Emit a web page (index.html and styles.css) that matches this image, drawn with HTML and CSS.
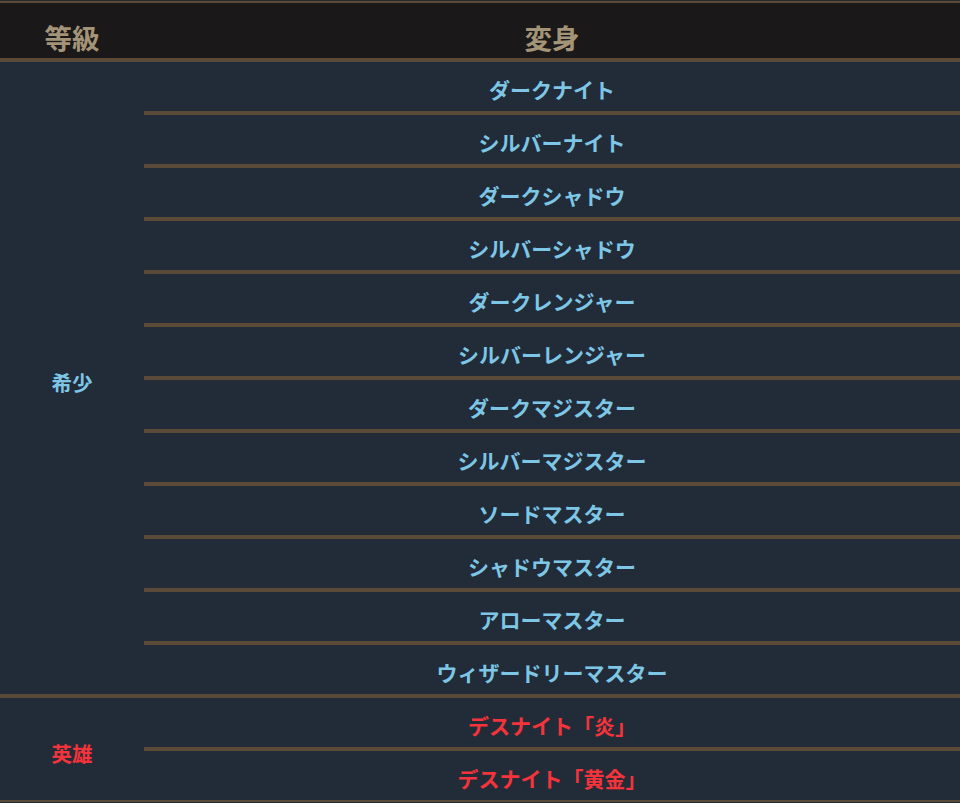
FILE: index.html
```html
<!DOCTYPE html>
<html lang="ja">
<head>
<meta charset="utf-8">
<title>変身</title>
<link rel="stylesheet" href="styles.css">
</head>
<body>
<div class="table">
  <div class="head">
    <div class="h-rank">等級</div>
    <div class="h-name">変身</div>
  </div>
  <div class="group rare">
    <div class="rank">希少</div>
    <div class="list">
      <div class="item">ダークナイト</div>
      <div class="item">シルバーナイト</div>
      <div class="item">ダークシャドウ</div>
      <div class="item">シルバーシャドウ</div>
      <div class="item">ダークレンジャー</div>
      <div class="item">シルバーレンジャー</div>
      <div class="item">ダークマジスター</div>
      <div class="item">シルバーマジスター</div>
      <div class="item">ソードマスター</div>
      <div class="item">シャドウマスター</div>
      <div class="item">アローマスター</div>
      <div class="item">ウィザードリーマスター</div>
    </div>
  </div>
  <div class="group hero">
    <div class="rank">英雄</div>
    <div class="list">
      <div class="item">デスナイト「炎」</div>
      <div class="item">デスナイト「黄金」</div>
    </div>
  </div>
</div>
</body>
</html>
```

FILE: styles.css
```css
html, body {
  margin: 0;
  padding: 0;
  background: #212c38;
}
body {
  font-family: "Noto Sans CJK JP", "Noto Sans", sans-serif;
  font-weight: 700;
}
.table {
  border-top: 1px solid #2a2a2a;
}
.head {
  display: flex;
  background: #1a1818;
  border-top: 2px solid #5c4a38;
  border-bottom: 4px solid #5c4a38;
  color: #a39377;
  font-size: 27.5px;
  line-height: 42px;
  padding-top: 13px;
}
.h-rank {
  width: 144px;
  text-align: center;
}
.h-name {
  flex: 1;
  text-align: center;
}
.group {
  display: flex;
  border-bottom: 4px solid #5c4a38;
}
.group.hero {
  border-bottom-width: 2px;
}
.rank {
  width: 144px;
  display: flex;
  align-items: center;
  justify-content: center;
  padding-top: 8px;
  box-sizing: border-box;
  font-size: 20.5px;
}
.list {
  flex: 1;
  display: flex;
  flex-direction: column;
}
.item {
  height: 43px;
  padding-top: 6px;
  line-height: 43px;
  text-align: center;
  font-size: 21px;
  border-bottom: 4px solid #5c4a38;
}
.item:last-child {
  border-bottom: none;
}
.rare {
  color: #7ec6e6;
}
.hero {
  color: #f4333a;
}
```
